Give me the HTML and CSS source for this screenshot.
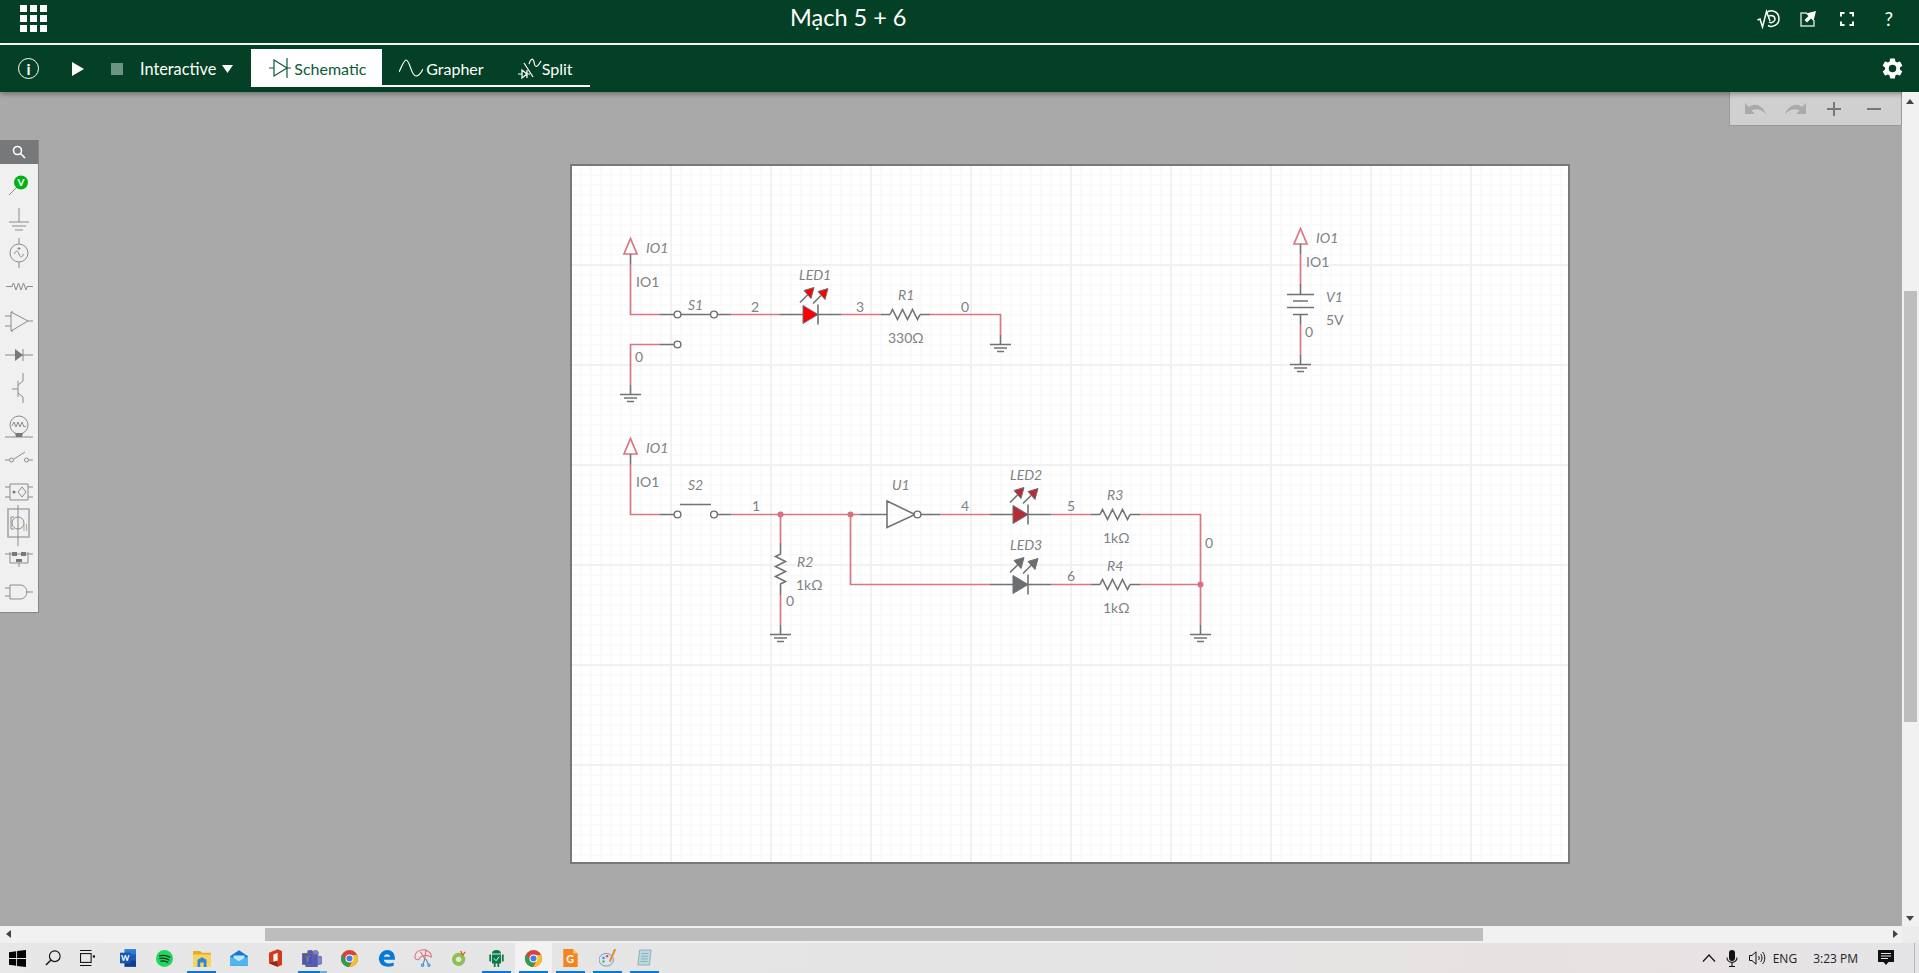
FILE: index.html
```html
<!DOCTYPE html>
<html>
    <head>
        <meta charset="utf-8">
        <title>Mạch 5 + 6</title>
        <link rel="stylesheet" href="styles.css">
    </head>
    <body>
        <header class="topbar">
            <div class="apps"><i></i><i></i><i></i><i></i><i></i><i></i><i></i><i></i><i></i></div>
            <div class="title">Mạch 5 + 6</div>
            <div class="top-actions">
                <svg width="23" height="20" viewBox="0 0 23 20" class="act-scope"><path d="M0.5 11 L3 10 L5.5 18 L9.500 2.500 L13 12"/><path d="M9.500 3.500 C14 0 22 2 22 10 C22 16 15 19 11 16.500"/><path d="M12 7 C15 5.500 18 7.500 18 10 C18 13 14 14.500 12 13"/></svg>
                <svg width="16" height="16" viewBox="0 0 16 16" class="act-share"><path class="box" d="M7 2 H1 V15 H14 V9"/><path class="arrow" d="M6 2.500 L16 0 L13.500 10 L11 7.500 L7 11.500 L4.500 9 L8.500 5 Z"/></svg>
                <svg width="14" height="14" viewBox="0 0 14 14" class="act-full"><path d="M1 4.500 V1 H4.500 M9.500 1 H13 V4.500 M13 9.500 V13 H9.500 M4.500 13 H1 V9.500"/></svg>
                <span class="act-help">?</span>
            </div>
        </header>

        <nav class="toolbar">
            <span class="info">i</span>
            <svg class="play" width="12" height="14" viewBox="0 0 12 14"><path d="M0 0 L12 7 L0 14 Z"/></svg>
            <span class="stop"></span>
            <span class="mode">Interactive</span>
            <svg class="caret" width="11" height="8" viewBox="0 0 11 8"><path d="M0 0 H11 L5.500 8 Z"/></svg>
            <div class="tabs">
                <div class="tab active">
                    <svg width="22" height="20" viewBox="0 0 22 20"><path d="M0 10 H5 M5 2 L18 10 L5 18 Z M18 0 V20 M18 10 H22"/></svg>
                    <span>Schematic</span>
                </div>
                <div class="tab grapher">
                    <svg width="24" height="20" viewBox="0 0 24 20"><path d="M0 14 C3 8 5 2 7 2 C11 2 12 18 17 18 C20 18 22 15 24 11"/></svg>
                    <span>Grapher</span>
                </div>
                <div class="tab split">
                    <svg width="24" height="24" viewBox="0 0 24 22"><path d="M0 17 H4 M4 13 L9 17 L4 21 Z M9 13 V21 M9 17 H12 M6 6 L15 20 M11 7 C13 1 15 1 16 5 C17 11 19 11 23 4"/></svg>
                    <span>Split</span>
                </div>
            </div>
            <svg class="gear" width="25" height="25" viewBox="0 0 24 24"><path d="M19.14 12.94c.04-.3.06-.61.06-.94 0-.32-.02-.64-.07-.94l2.03-1.58a.49.49 0 0 0 .12-.61l-1.92-3.32a.49.49 0 0 0-.59-.22l-2.39.96c-.5-.38-1.03-.7-1.62-.94l-.36-2.54a.48.48 0 0 0-.48-.41h-3.84c-.24 0-.43.17-.47.41l-.36 2.54c-.59.24-1.13.57-1.62.94l-2.39-.96c-.22-.08-.47 0-.59.22L2.74 8.87c-.12.21-.08.47.12.61l2.03 1.58c-.05.3-.09.63-.09.94s.02.64.07.94l-2.03 1.58a.49.49 0 0 0-.12.61l1.92 3.32c.12.22.37.29.59.22l2.39-.96c.5.38 1.03.7 1.62.94l.36 2.54c.05.24.24.41.48.41h3.84c.24 0 .44-.17.47-.41l.36-2.54c.59-.24 1.13-.56 1.62-.94l2.39.96c.22.08.47 0 .59-.22l1.92-3.32c.12-.22.07-.47-.12-.61l-2.01-1.58zM12 15.6A3.6 3.6 0 1 1 12 8.400a3.600 3.600 0 0 1 0 7.200z"/></svg>
        </nav>

        <main class="workspace">
            <div class="canvas">
                <!-- parts palette -->
                <aside class="palette">
                    <div class="palette-search">
                        <svg width="14" height="14" viewBox="0 0 14 14"><circle cx="5.500" cy="5.500" r="4"/><path d="M8.500 8.500 L13 13"/></svg>
                    </div>
                    <svg class="palette-icons" width="38" height="448" viewBox="0 164 38 448">
                        <path d="M9 195 L16 188"/>
                        <circle class="probe" cx="21" cy="182.500" r="7"/>
                        <text class="probe-v" x="21" y="186">V</text>
                        <!-- ground -->
                        <path d="M19 208 V222 M9 222 H29 M12 226 H26 M15 230 H23"/>
                        <!-- source -->
                        <circle cx="19" cy="253" r="9"/>
                        <path d="M19 238 V244 M19 262 V268 M14.500 254 C16 250 17.500 250 19 254 C20.500 258 22 258 23.500 254 M19 247 V250 M17.500 248.500 H20.500"/>
                        <!-- resistor -->
                        <path d="M6 286.500 H12 L13.500 283 L16 290 L18.500 283 L21 290 L23.500 283 L26 290 L27 286.500 H33"/>
                        <!-- opamp -->
                        <path d="M11 312 L28 321 L11 331 Z M5 316 H11 M5 326 H11 M28 321 H33 M12 313 V311 M12 330 V332"/>
                        <!-- diode -->
                        <path d="M5 355 H33 M23 349 V361"/>
                        <path class="solid" d="M15 349 L23 355 L15 361 Z"/>
                        <!-- transistor -->
                        <path d="M18 381 V397 M12 389 H18 M18 385 L23 381 V373 M18 393 L23 397 V403"/>
                        <!-- lamp -->
                        <circle cx="19" cy="425" r="9"/>
                        <path d="M5 437 H33 M12 426 L14 422 L16 427 L18 422 L20 427 L22 422 L24 427 L26 426"/>
                        <path class="solid" d="M15 433 H23 L22 437 H16 Z"/>
                        <!-- switch -->
                        <path d="M5 460 H9 M14 459 L25 452 M29 460 H33"/>
                        <circle cx="11.500" cy="460" r="2"/>
                        <circle cx="26.500" cy="460" r="2"/>
                        <!-- optocoupler -->
                        <path d="M10 484 H28 V500 H10 Z M5 487 H10 M5 497 H10 M28 487 H33 M28 497 H33 M22 487 L26 492 L22 497 L18 492 Z"/>
                        <circle class="solid" cx="14" cy="492" r="1.500"/>
                        <!-- tube -->
                        <path class="heavy" d="M8 509 H29 V537 H8 Z"/>
                        <path d="M18 505 V546"/>
                        <circle cx="18" cy="523" r="6"/>
                        <path class="amber" d="M24 524 V531 M26.500 524 V531"/>
                        <path d="M11 517 H14 M11 529 H14 M11 517 V529"/>
                        <!-- relay -->
                        <path d="M5 554 H33 M10 552 V563 H28 V552 M19 563 V567"/>
                        <path class="solid" d="M12 552 H17 V556 H12 Z M21 552 H26 V556 H21 Z M16 559 H22 V562 H16 Z"/>
                        <!-- and gate -->
                        <path d="M10 585 H20 C29 585 29 599 20 599 H10 Z M5 588 H10 M5 596 H10 M26 592 H33"/>
                    </svg>
                </aside>

                <!-- undo / zoom buttons -->
                <div class="history">
                    <svg width="22" height="13" viewBox="0 0 22 13" class="dim"><path d="M0 1 V12 H10 L6.500 8.500 C11 6 16 7 21 12 C18 4 10 0 4 5 Z"/></svg>
                    <svg width="22" height="13" viewBox="0 0 22 13" class="dim redo"><path d="M22 1 V12 H12 L15.500 8.500 C11 6 6 7 1 12 C4 4 12 0 18 5 Z"/></svg>
                    <span class="plus"></span>
                    <span class="minus"></span>
                </div>

                <section class="sheet">
                    <svg class="schematic" width="996" height="696" viewBox="572 166 996 696">
                        <defs>
                            <g id="io">
                                <path class="wire" d="M0 0 L-6.500 15.500 H6.500 Z"/>
                            </g>
                            <g id="gnd">
                                <path class="lead" d="M-10.500 0 H10.500 M-6.500 3.500 H6.500 M-3.500 7 H3.500"/>
                            </g>
                            <g id="res">
                                <path class="lead" d="M0 0 l2.500 -5 5 10 5 -10 5 10 5 -10 5 10 2.500 -5"/>
                            </g>
                            <g id="led">
                                <path d="M0 -9 L15 0 L0 9 Z"/>
                                <path class="lead" d="M15 -10 V10 M-3 -12 L5 -20 M10 -11 L18 -19"/>
                                <path d="M11 -27 L1 -24 L8 -16 Z M25 -26 L15 -23 L22 -15 Z"/>
                            </g>
                            <g id="term">
                                <circle class="terminal" r="3.400"/>
                            </g>
                        </defs>

                        <!-- first switch branch -->
                        <use href="#io" x="630.500" y="238.500"/>
                        <path class="lead" d="M630.500 254 V264"/>
                        <path class="wire" d="M630.500 264 V314.500 H660"/>
                        <path class="lead" d="M660 314.500 H731"/>
                        <use href="#term" x="677.500" y="314.500"/>
                        <use href="#term" x="714" y="314.500"/>
                        <path class="wire" d="M731 314.500 H780"/>
                        <path class="lead" d="M780 314.500 H803 M818 314.500 H841"/>
                        <use href="#led" class="on" x="803" y="314.500"/>
                        <path class="wire" d="M841 314.500 H881"/>
                        <path class="lead" d="M881 314.500 H890 M920 314.500 H930"/>
                        <use href="#res" x="890" y="314.500"/>
                        <path class="wire" d="M930 314.500 H1000.500 V335"/>
                        <path class="lead" d="M1000.500 335 V344.500"/>
                        <use href="#gnd" x="1000.500" y="344.500"/>

                        <path class="wire" d="M660 344.500 H630.500 V385"/>
                        <path class="lead" d="M660 344.500 H674 M630.500 385 V394.500"/>
                        <use href="#term" x="677.500" y="344.500"/>
                        <use href="#gnd" x="630.500" y="394.500"/>

                        <!-- second switch branch -->
                        <use href="#io" x="630.500" y="438.500"/>
                        <path class="lead" d="M630.500 454 V464"/>
                        <path class="wire" d="M630.500 464 V514.500 H660"/>
                        <path class="lead" d="M660 514.500 H674 M717.500 514.500 H731 M680 504.500 H711"/>
                        <use href="#term" x="677.500" y="514.500"/>
                        <use href="#term" x="714" y="514.500"/>
                        <path class="wire" d="M731 514.500 H860"/>
                        <circle class="node" cx="780.500" cy="514.500" r="3"/>
                        <circle class="node" cx="850.500" cy="514.500" r="3"/>
                        <path class="lead" d="M860 514.500 H887 M887 501 L915 514.500 L887 527.500 Z M920.500 514.500 H940"/>
                        <use href="#term" x="917.500" y="514.500"/>
                        <path class="wire" d="M940 514.500 H990"/>
                        <path class="lead" d="M990 514.500 H1013 M1028 514.500 H1051"/>
                        <use href="#led" class="half" x="1013" y="514.500"/>
                        <path class="wire" d="M1051 514.500 H1091"/>
                        <path class="lead" d="M1091 514.500 H1100 M1130 514.500 H1140"/>
                        <use href="#res" x="1100" y="514.500"/>
                        <path class="wire" d="M1140 514.500 H1200.500 V625"/>
                        <path class="lead" d="M1200.500 625 V634.500"/>
                        <use href="#gnd" x="1200.500" y="634.500"/>

                        <path class="wire" d="M780.500 514.500 V543"/>
                        <path class="lead" d="M780.500 543 V554 l-5 2.500 10 5 -10 5 10 5 -10 5 10 5 -5 2.500 V595"/>
                        <path class="wire" d="M780.500 595 V625"/>
                        <path class="lead" d="M780.500 625 V634.500"/>
                        <use href="#gnd" x="780.500" y="634.500"/>

                        <path class="wire" d="M850.500 514.500 V584.500 H990"/>
                        <path class="lead" d="M990 584.500 H1013 M1028 584.500 H1051"/>
                        <use href="#led" class="off" x="1013" y="584.500"/>
                        <path class="wire" d="M1051 584.500 H1091"/>
                        <path class="lead" d="M1091 584.500 H1100 M1130 584.500 H1140"/>
                        <use href="#res" x="1100" y="584.500"/>
                        <path class="wire" d="M1140 584.500 H1200.500"/>
                        <circle class="node" cx="1200.500" cy="584.500" r="3"/>

                        <!-- battery -->
                        <use href="#io" x="1300.500" y="228.500"/>
                        <path class="lead" d="M1300.500 244 V254 M1300.500 284 V294.500 M1287 294.500 H1314 M1293 301 H1308 M1287 307.500 H1314 M1293 314.500 H1308 M1300.500 314.500 V324 M1300.500 355 V364.500"/>
                        <path class="wire" d="M1300.500 254 V284 M1300.500 324 V355"/>
                        <use href="#gnd" x="1300.500" y="364.500"/>

                        <!-- labels -->
                        <text class="ref" x="646" y="253">IO1</text>
                        <text class="net" x="636" y="287">IO1</text>
                        <text class="ref" x="688" y="310">S1</text>
                        <text class="net" x="751" y="312">2</text>
                        <text class="ref" x="799" y="280">LED1</text>
                        <text class="net" x="856" y="312">3</text>
                        <text class="ref" x="898" y="300">R1</text>
                        <text class="net" x="961" y="312">0</text>
                        <text class="val" x="888" y="343">330Ω</text>
                        <text class="net" x="635" y="362">0</text>

                        <text class="ref" x="646" y="453">IO1</text>
                        <text class="net" x="636" y="487">IO1</text>
                        <text class="ref" x="688" y="490">S2</text>
                        <text class="net" x="752" y="511">1</text>
                        <text class="ref" x="892" y="490">U1</text>
                        <text class="ref" x="797" y="567">R2</text>
                        <text class="val" x="796" y="590">1kΩ</text>
                        <text class="net" x="786" y="606">0</text>

                        <text class="net" x="961" y="511">4</text>
                        <text class="ref" x="1010" y="480">LED2</text>
                        <text class="net" x="1067" y="511">5</text>
                        <text class="ref" x="1107" y="500">R3</text>
                        <text class="val" x="1103" y="543">1kΩ</text>
                        <text class="net" x="1205" y="548">0</text>
                        <text class="ref" x="1010" y="550">LED3</text>
                        <text class="net" x="1067" y="581">6</text>
                        <text class="ref" x="1107" y="571">R4</text>
                        <text class="val" x="1103" y="613">1kΩ</text>

                        <text class="ref" x="1316" y="243">IO1</text>
                        <text class="net" x="1306" y="267">IO1</text>
                        <text class="ref" x="1326" y="302">V1</text>
                        <text class="val" x="1326" y="325">5V</text>
                        <text class="net" x="1305" y="337">0</text>
                    </svg>
                </section>
            </div>
            <div class="vscroll">
                <span class="arrow-up"></span>
                <div class="vthumb"></div>
                <span class="arrow-down"></span>
            </div>
        </main>

        <div class="hscroll">
            <span class="arrow-left"></span>
            <div class="hthumb"></div>
            <span class="arrow-right"></span>
            <span class="corner"></span>
        </div>

        <footer class="taskbar">
            <div class="task sys"><svg width="17" height="17" viewBox="0 0 19 19"><path fill="#000" d="M0 2.500 L8 1.300 V9 H0 Z M9 1.200 L19 0 V9 H9 Z M0 10 H8 V17.700 L0 16.500 Z M9 10 H19 V19 L9 17.800 Z"/></svg></div>
            <div class="task sys"><svg width="16" height="16" viewBox="0 0 18 18"><circle cx="11" cy="7" r="6" fill="none" stroke="#111" stroke-width="1.300"/><path d="M6.500 11.500 L1 17" stroke="#111" stroke-width="1.600"/></svg></div>
            <div class="task sys"><svg width="15" height="16" viewBox="0 0 17 18" fill="none" stroke="#111" stroke-width="1.200"><path d="M0 .600 H13 M0 17.400 H13"/><rect x=".600" y="4" width="12" height="10"/><rect x="14.500" y="6" width="2.500" height="2.500" fill="#111" stroke="none"/></svg></div>
            <div class="task first-app"><svg width="16" height="18" viewBox="0 0 18 20"><path fill="#2b7cd3" d="M5 0 H18 V7 H5 Z"/><path fill="#185abd" d="M5 6 H18 V14 H5 Z"/><path fill="#103f91" d="M5 13 H18 V20 H5 Z"/><rect y="4" width="12" height="12" fill="#1a56b0"/><text class="word-w" x="6" y="13.500">W</text></svg></div>
            <div class="task"><svg width="17" height="17" viewBox="0 0 19 19"><circle cx="9.500" cy="9.500" r="9.500" fill="#1ed760"/><path d="M4 6.500 C8 5.500 12 6 15.500 8 M4.500 9.500 C8 8.700 11.500 9.200 14.500 11 M5.500 12.500 C8 12 11 12.300 13.200 13.800" fill="none" stroke="#14361f" stroke-width="1.500" stroke-linecap="round"/></svg></div>
            <div class="task running"><svg width="18" height="17" viewBox="0 0 20 19"><path fill="#e8a92b" d="M0 1 H8 L10 3 H20 V8 H0 Z"/><path fill="#f9d35f" d="M0 5 H20 V19 H0 Z"/><path fill="#2a86d8" d="M5 19 V11 L10 8 L15 11 V19 H12 V14 H8 V19 Z"/></svg></div>
            <div class="task"><svg width="18" height="16" viewBox="0 0 21 18"><path fill="#0f78d4" d="M0 7 L10.500 0 L21 7 V18 H0 Z"/><path fill="#4fb7f0" d="M0 7 L10.500 13 L21 7 V18 H0 Z"/><path fill="#bfe6fb" d="M4 6 H17 V9 L10.500 13 L4 9 Z"/></svg></div>
            <div class="task"><svg width="13" height="18" viewBox="0 0 15 20"><path fill="#d13b1a" d="M0 4 L10 0 L15 2 V18 L10 20 L0 16 Z"/><path fill="#f3f0ee" d="M5 6 L10 4 V16 L5 14 Z"/><path fill="#96231c" d="M0 16 L10 13 V20 Z"/></svg></div>
            <div class="task running half"><svg width="20" height="17" viewBox="0 0 22 19"><circle cx="15" cy="3.500" r="3" fill="#7b83eb"/><rect x="13" y="7" width="9" height="9" rx="2" fill="#7b83eb"/><circle cx="9" cy="3" r="3" fill="#5059c9"/><rect x="4" y="5" width="13" height="14" rx="1" fill="#5059c9"/><rect y="4" width="12" height="12" fill="#4b53bc"/><text class="teams-t" x="6" y="13.500">T</text></svg></div>
            <div class="task"><svg width="17" height="17" viewBox="0 0 19 19"><use href="#chrome-mark"/></svg></div>
            <div class="task"><svg width="17" height="17" viewBox="0 0 19 19"><path fill="#0a78d7" d="M1 9 C2 3 6 0 10.500 0 C16 0 19 4 19 11 H6.500 C7 15 12 16.500 17.500 14 V17.500 C11 20 3 18.500 1.500 12 C1 11 .800 10 1 9 Z M6.500 7.500 H13.500 C13.500 4 7.500 3.500 6.500 7.500 Z"/></svg></div>
            <div class="task"><svg width="19" height="18" viewBox="0 0 21 20" fill="none" stroke="#e0707a" stroke-width="1.200"><path d="M1 9 C1 3 7 0 12 1 C17 2 20 6 19 9 C14 6 8 6 5 12 C3 12 1 11 1 9 Z M7 3 L12 11 M13 2 L12 11"/><path d="M12 11 L10 17 M13 11 L16 17" stroke="#3a8fd0"/><circle cx="9.500" cy="18" r="1.300" stroke="#3a8fd0"/><circle cx="16.500" cy="18" r="1.300" stroke="#3a8fd0"/></svg></div>
            <div class="task"><svg width="15" height="16" viewBox="0 0 17 18"><circle cx="7.500" cy="10.500" r="7.500" fill="#8cc152"/><circle cx="7.500" cy="10.500" r="3" fill="#e6e6e6"/><path d="M10 1 L12 6 M15 2 L12 6" stroke="#e05a2b" stroke-width="1.500"/></svg></div>
            <div class="task running"><svg width="15" height="18" viewBox="0 0 16 20"><path fill="#0b7a4b" d="M3 5 C3 2 5.500 1 8 1 C10.500 1 13 2 13 5 Z M0 6 H2 V14 H0 Z M14 6 H16 V14 H14 Z M3 6 H13 V16 H11 V20 H9 V16 H7 V20 H5 V16 H3 Z"/><path d="M5 10.500 L7.500 13 L11 8.500" fill="none" stroke="#fff" stroke-width="1"/></svg></div>
            <div class="task running current"><svg width="17" height="17" viewBox="0 0 19 19"><g id="chrome-mark"><circle cx="9.500" cy="9.500" r="9.500" fill="#d9423a"/><path fill="#f5c02e" d="M9.500 5.500 H18 A9.500 9.500 0 0 1 9 19 L13 12 Z"/><path fill="#2f9e50" d="M1.300 4.600 L6 12.500 L10 13.500 L9 19 A9.500 9.500 0 0 1 1.300 4.600 Z"/><circle cx="9.500" cy="9.500" r="4.500" fill="#fff"/><circle cx="9.500" cy="9.500" r="3.400" fill="#3f7fe8"/></g></svg></div>
            <div class="task running"><svg width="15" height="18" viewBox="0 0 16 20"><path fill="#f5841f" d="M0 0 H11 L16 5 V20 H0 Z"/><path fill="#fbc48f" d="M11 0 L16 5 H11 Z"/><text class="gdoc-g" x="7.500" y="15">G</text></svg></div>
            <div class="task running"><svg width="18" height="18" viewBox="0 0 20 20"><ellipse cx="8" cy="12" rx="8" ry="7" fill="#d9e6f2" stroke="#6f8fae"/><circle cx="5" cy="10" r="1.400" fill="#3a8fd0"/><circle cx="9" cy="8" r="1.400" fill="#e0505a"/><circle cx="5" cy="14" r="1.400" fill="#6ab04c"/><path d="M18 0 L12 14" stroke="#e58a2e" stroke-width="2.200"/></svg></div>
            <div class="task running"><svg width="15" height="18" viewBox="0 0 17 20"><path fill="#b9dbe3" stroke="#7a9aa6" stroke-width=".8" d="M3 1 H16 L14 18 H1 Z"/><path d="M5 5 H13 M4.600 8 H12.600 M4.300 11 H12.300 M4 14 H12" stroke="#7a9aa6" stroke-width=".8"/></svg></div>

            <div class="tray">
                <svg class="tray-up" width="14" height="8" viewBox="0 0 14 8"><path d="M1 7.500 L7 1 L13 7.500"/></svg>
                <svg class="tray-mic" width="12" height="17" viewBox="0 0 12 17"><rect x="3" y="0" width="6" height="11" rx="3" fill="#111"/><path d="M1 7.500 C1 14 11 14 11 7.500 M6 12 V16 M3 16.500 H9" fill="none" stroke="#111" stroke-width="1.100"/></svg>
                <svg class="tray-sound" width="17" height="14" viewBox="0 0 17 14" fill="none" stroke="#111"><path d="M.500 4.500 H3 L7 .800 V13.200 L3 9.500 H.500 Z M9.500 5 C10.500 6 10.500 8 9.500 9 M11.500 3 C13.500 5 13.500 9 11.500 11 M13.500 1 C16.500 4 16.500 10 13.500 13"/></svg>
                <span class="tray-lang">ENG</span>
                <span class="tray-time">3:23 PM</span>
                <svg class="tray-note" width="16" height="16" viewBox="0 0 16 16"><path fill="#111" d="M0 0 H16 V12 H10.500 L8 15 L5.500 12 H0 Z"/><path d="M3 3.500 H13 M3 6 H13 M3 8.500 H10" stroke="#e6e6e6"/></svg>
                <span class="tray-edge"></span>
            </div>
        </footer>
    </body>
</html>
```

FILE: styles.css
```css
html, body {
    height: 100%;
    margin: 0;
}
body {
    display: flex;
    flex-direction: column;
    overflow: hidden;
    font-family: "Lato", "Open Sans", sans-serif;
    background: #a9a9a9;
}

/* top bars */
.topbar {
    height: 43px;
    box-sizing: content-box;
    flex: none;
    display: flex;
    align-items: center;
    background: #034025;
    color: #fff;
    border-bottom: 2px solid #fff;
}
.apps {
    display: grid;
    grid-template-columns: repeat(3, 7px);
    grid-auto-rows: 7px;
    gap: 3px;
    margin: 0 0 6px 20px;
}
.apps i {
    background: #fff;
}
.title {
    flex: 1;
    padding: 0 108px 10px 0;
    text-align: center;
    font-size: 23.5px;
    line-height: 36px;
}
.top-actions {
    display: flex;
    align-items: center;
    margin: 0 26px 6px 0;
}
.top-actions svg {
    fill: none;
    stroke: #fff;
}
.act-scope {
    stroke-width: 1.5;
    margin-right: 20px;
}
.act-share {
    margin-right: 24px;
}
.act-share .box {
    stroke-width: 1.5;
    stroke: #c9d6cf;
}
.act-share .arrow {
    fill: #fff;
    stroke: none;
}
.act-full {
    stroke-width: 2;
    margin-right: 30px;
}
.act-help {
    font-size: 19px;
    line-height: 20px;
}

.toolbar {
    height: 47px;
    flex: none;
    display: flex;
    align-items: center;
    background: #034025;
    color: #fff;
    box-shadow: 0 2px 5px rgba(0, 0, 0, 0.35);
    position: relative;
    z-index: 3;
}
.info {
    width: 19px;
    height: 19px;
    margin-left: 18px;
    border: 1.5px solid #fff;
    border-radius: 50%;
    text-align: center;
    font-size: 16px;
    font-weight: 700;
    line-height: 19px;
}
.play {
    margin-left: 33px;
    fill: #fff;
}
.stop {
    width: 12px;
    height: 12px;
    margin-left: 27px;
    background: #6b9580;
}
.mode {
    margin-left: 17px;
    font-size: 16.3px;
}
.caret {
    margin-left: 6px;
    fill: #fff;
}
.tabs {
    display: flex;
    align-self: flex-start;
    width: 339px;
    height: 36px;
    margin: 4px 0 0 18px;
    border-bottom: 2px solid #fff;
    box-sizing: content-box;
}
.tab {
    display: flex;
    align-items: center;
    gap: 3px;
    height: 38px;
    box-sizing: border-box;
    font-size: 16px;
}
.tab svg {
    fill: none;
    stroke: currentColor;
    stroke-width: 1.2;
}
.tab.active {
    width: 131px;
    padding-left: 18px;
    background: #fff;
    color: #0c5a3a;
    margin-bottom: -2px;
}
.tab.grapher {
    margin-left: 17px;
}
.tab.split {
    margin-left: 34px;
    gap: 0;
}
.gear {
    margin-left: auto;
    margin-right: 14px;
    fill: #fff;
}

/* work area */
.workspace {
    flex: 1;
    min-height: 0;
    display: flex;
}
.canvas {
    flex: 1;
    position: relative;
    overflow: hidden;
    background: #a9a9a9;
}
.palette {
    position: absolute;
    left: 0;
    top: 48px;
    width: 38px;
    height: 472px;
    background: #f0f0f0;
    border-right: 1px solid #888;
    border-bottom: 1px solid #888;
}
.palette-search {
    height: 24px;
    background: #77787a;
    display: flex;
    align-items: center;
    justify-content: center;
}
.palette-search svg {
    fill: none;
    stroke: #fff;
    stroke-width: 1.6;
}
.palette-icons {
    display: block;
    fill: none;
    stroke: #8a8b8d;
    stroke-width: 1;
}
.palette-icons .solid {
    fill: #77787a;
    stroke: none;
}
.palette-icons .heavy {
    stroke: #a5a6a8;
    stroke-width: 1.6;
}
.palette-icons .amber {
    stroke: #b9a58a;
}
.palette-icons .probe {
    fill: #00b312;
    stroke: none;
}
.probe-v {
    fill: #fff;
    stroke: none;
    font-size: 10px;
    font-weight: 700;
    text-anchor: middle;
}

.history {
    position: absolute;
    right: 0;
    top: 0;
    width: 173px;
    height: 34px;
    display: flex;
    align-items: center;
    gap: 18px;
    padding-left: 15px;
    box-sizing: border-box;
    background: #d0d0d0;
    border: 1px solid #999;
    border-top: none;
}
.history .dim {
    fill: #aaa;
}
.history .redo {
    margin-left: -1px;
}
.plus, .minus {
    position: relative;
    display: block;
    width: 14px;
    height: 2px;
    background: #777;
}
.plus {
    margin-left: 3px;
}
.minus {
    margin-left: 8px;
}
.plus::after {
    content: "";
    position: absolute;
    left: 6px;
    top: -6px;
    width: 2px;
    height: 14px;
    background: #777;
}

.sheet {
    width: 1000px;
    height: 700px;
    box-sizing: border-box;
    margin: 72px 0 0 570px;
    border: 2px solid #77787a;
    background-color: #fff;
    background-image:
        linear-gradient(90deg, #f1f1f1 2px, transparent 2px),
        linear-gradient(#f1f1f1 2px, transparent 2px),
        linear-gradient(90deg, #fafafa 2px, transparent 2px),
        linear-gradient(#fafafa 2px, transparent 2px);
    background-size: 100px 100px, 100px 100px, 10px 10px, 10px 10px;
    background-position: 98px 0, 0 98px, 8px 0, 0 8px;
}
.schematic {
    display: block;
}
.wire {
    fill: none;
    stroke: #da7785;
    stroke-width: 1.7;
}
.lead {
    fill: none;
    stroke: #727376;
    stroke-width: 1.6;
}
.terminal {
    fill: #fff;
    stroke: #6d6e71;
    stroke-width: 1.4;
}
.node {
    fill: #d9707f;
}
.on {
    fill: #f00;
    stroke: #6d6e71;
}
.half {
    fill: #b72c33;
    stroke: #6d6e71;
}
.off {
    fill: #6d6e71;
    stroke: #6d6e71;
}
.schematic text {
    font-size: 14px;
    fill: #808184;
}
.schematic .ref {
    font-style: italic;
}

/* scrollbars */
.vscroll {
    position: relative;
    width: 17px;
    background: #f1f1f1;
    z-index: 4;
}
.vthumb {
    position: absolute;
    left: 2px;
    top: 199px;
    width: 13px;
    height: 431px;
    background: #bdbdbd;
}
.arrow-up, .arrow-down, .arrow-left, .arrow-right {
    position: absolute;
    width: 0;
    height: 0;
    border: 4px solid transparent;
}
.arrow-up {
    left: 4px;
    top: 3px;
    border-bottom: 5px solid #444;
}
.arrow-down {
    left: 4px;
    bottom: 1px;
    border-top: 5px solid #444;
}
.hscroll {
    position: relative;
    height: 17px;
    flex: none;
    background: #f1f1f1;
}
.hthumb {
    position: absolute;
    left: 265px;
    top: 2px;
    width: 1218px;
    height: 13px;
    background: #bdbdbd;
}
.arrow-left {
    left: 2px;
    top: 4px;
    border-right: 5px solid #444;
}
.arrow-right {
    right: 17px;
    top: 4px;
    border-left: 5px solid #444;
}
.corner {
    position: absolute;
    right: 0;
    top: 0;
    width: 17px;
    height: 17px;
    background: #ececec;
}

/* windows taskbar */
.taskbar {
    height: 30px;
    flex: none;
    display: flex;
    align-items: stretch;
    background: linear-gradient(90deg, #e7e7e7, #e4e4e4 55%, #e8e2e2 85%, #e4e4e7);
}
.task {
    position: relative;
    width: 36.9px;
    display: flex;
    align-items: center;
    justify-content: center;
}
.task.sys {
    width: 35px;
}
.task.first-app {
    margin-left: 4.5px;
}
.task.current {
    background: #f2f2f2;
}
.task.running::after {
    content: "";
    position: absolute;
    left: 4px;
    right: 4px;
    bottom: 0;
    height: 2px;
    background: #0a78d7;
}
.task.half::after {
    background: linear-gradient(90deg, #0a78d7 75%, #6aaee6 75%);
}
.word-w, .teams-t, .gdoc-g {
    fill: #fff;
    font-size: 9px;
    font-weight: 700;
    text-anchor: middle;
}
.gdoc-g {
    font-size: 12px;
}
.tray {
    margin-left: auto;
    display: flex;
    align-items: center;
    font-family: "Open Sans", sans-serif;
    font-size: 12px;
    color: #222;
}
.tray-up {
    fill: none;
    stroke: #111;
    stroke-width: 1.2;
    margin-right: 10px;
}
.tray-mic {
    margin-right: 11px;
}
.tray-sound {
    margin-right: 7px;
}
.tray-lang {
    margin-right: 16px;
}
.tray-time {
    margin-right: 20px;
}
.tray-edge {
    width: 1px;
    height: 100%;
    margin-left: 20px;
    margin-right: 4px;
    background: #b8b8b8;
}
```
